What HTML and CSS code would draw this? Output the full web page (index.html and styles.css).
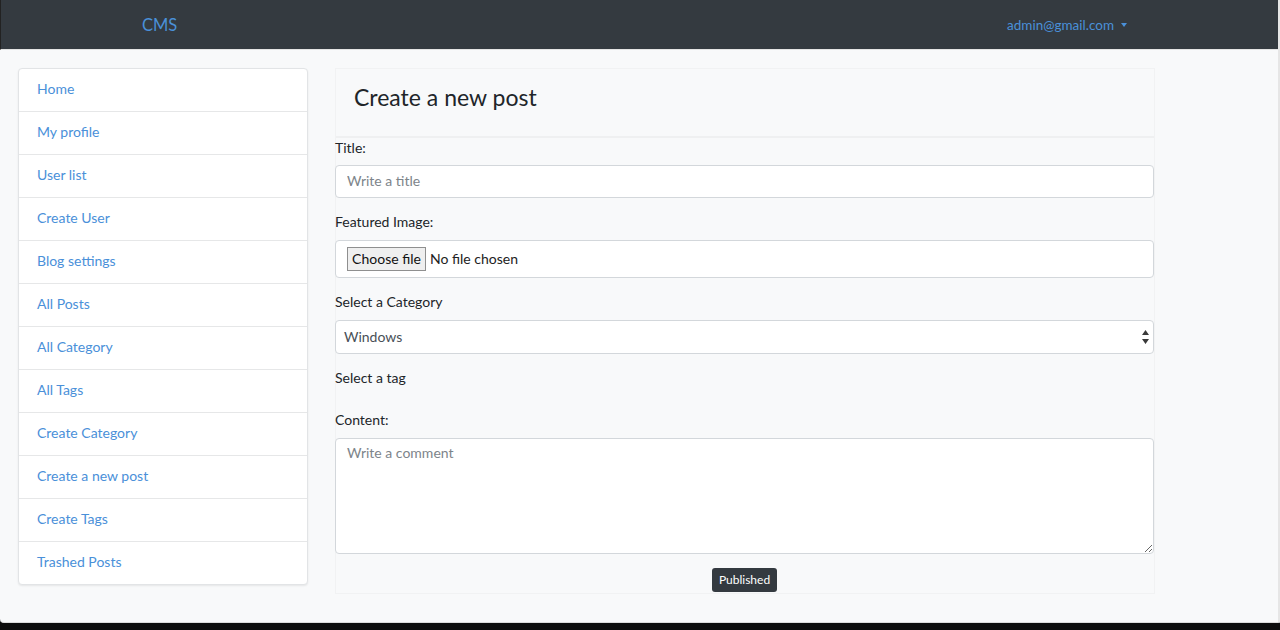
FILE: index.html
```html
<!DOCTYPE html>
<html lang="en">
<head>
<meta charset="utf-8">
<title>CMS - Create a new post</title>
<link rel="stylesheet" href="styles.css">
</head>
<body>
<div class="window">
  <nav class="navbar">
    <a class="brand" href="#">CMS</a>
    <a class="user" href="#">admin@gmail.com <span class="caret"></span></a>
  </nav>
  <div class="layout">
    <aside class="sidebar">
      <ul class="list">
        <li><a href="#">Home</a></li>
        <li><a href="#">My profile</a></li>
        <li><a href="#">User list</a></li>
        <li><a href="#">Create User</a></li>
        <li><a href="#">Blog settings</a></li>
        <li><a href="#">All Posts</a></li>
        <li><a href="#">All Category</a></li>
        <li><a href="#">All Tags</a></li>
        <li><a href="#">Create Category</a></li>
        <li><a href="#">Create a new post</a></li>
        <li><a href="#">Create Tags</a></li>
        <li><a href="#">Trashed Posts</a></li>
      </ul>
    </aside>
    <main class="card">
      <div class="card-header">Create a new post</div>
      <form class="card-body">
        <label class="lbl">Title:</label>
        <input class="field" type="text" placeholder="Write a title">
        <label class="lbl gap">Featured Image:</label>
        <div class="file">
          <span class="file-btn">Choose file</span>
          <span class="file-txt">No file chosen</span>
        </div>
        <label class="lbl gap">Select a Category</label>
        <div class="select">
          <span>Windows</span>
          <svg class="arrows" width="7" height="14" viewBox="0 0 7 14"><path d="M3.5 0 L7 5 L0 5 Z M0 9 L7 9 L3.5 14 Z" fill="#3a3a3a"/></svg>
        </div>
        <label class="lbl gap">Select a tag</label>
        <label class="lbl gap2">Content:</label>
        <textarea class="area" placeholder="Write a comment"></textarea>
        <div class="actions"><button type="button" class="btn">Published</button></div>
      </form>
    </main>
  </div>
</div>
</body>
</html>
```

FILE: styles.css
```css
* { box-sizing: border-box; }
html, body { margin: 0; padding: 0; }
body {
  background: #0d0d0d;
  font-family: Lato, "Open Sans", sans-serif;
  font-size: 14px;
  color: #212529;
}
.window {
  width: 1280px;
  height: 623px;
  background: #f8f9fa;
  border-right: 2px solid #e6e6e6;
  border-bottom: 1px solid #dcdcdc;
  border-bottom-left-radius: 4px;
  overflow: hidden;
}
.navbar {
  height: 50px;
  background: #343a40;
  border-bottom: 1px solid #e4e4e4;
  border-left: 1px solid #222;
  display: flex;
  align-items: center;
  justify-content: space-between;
  padding: 0 151px 0 141px;
}
.brand {
  color: #4a90d9;
  font-size: 16.5px;
  text-decoration: none;
}
.user {
  color: #4a90d9;
  font-size: 13.5px;
  text-decoration: none;
  display: flex;
  align-items: center;
}
.caret {
  display: inline-block;
  margin-left: 7px;
  border-top: 4px solid #4a90d9;
  border-left: 3.5px solid transparent;
  border-right: 3.5px solid transparent;
}
.layout {
  display: flex;
  align-items: flex-start;
  gap: 27px;
  padding: 18px 0 0 18px;
}
.sidebar { width: 290px; }
.list {
  list-style: none;
  margin: 0;
  padding: 0;
  background: #fff;
  border: 1px solid #e2e4e6;
  border-radius: 4px;
  box-shadow: 0 1px 2px rgba(0,0,0,.08);
}
.list li {
  height: 43px;
  border-bottom: 1px solid #e6e7e8;
  display: flex;
  align-items: center;
  padding: 0 0 3px 18px;
}
.list li:last-child { border-bottom: none; height: 42px; }
.list a {
  color: #4a90d9;
  text-decoration: none;
  font-size: 14px;
}
.card {
  width: 820px;
  background: #f8f9fa;
  border: 1px solid #f1f2f3;
}
.card-header {
  height: 69px;
  padding: 0 0 11px 18px;
  display: flex;
  align-items: center;
  font-size: 23px;
  border-bottom: 2px solid #eff0f1;
}
.card-body {
  display: flex;
  flex-direction: column;
  margin: 0 0 0 -1px;
}
.lbl {
  display: block;
  line-height: 20px;
  margin-bottom: 7px;
  font-size: 14px;
}
.lbl.gap { margin-top: 14px; margin-bottom: 8px; }
.lbl.gap2 { margin-top: 14px; margin-bottom: 8px; }
.field, .file, .select, .area {
  width: 819px;
  background: #fff;
  border: 1px solid #d3d7db;
  border-radius: 4px;
  font-family: inherit;
  font-size: 14px;
  color: #495057;
}
.field {
  height: 33px;
  padding: 0 11px 2px;
  outline: none;
}
.field::placeholder, .area::placeholder { color: #7d848a; }
.file {
  height: 38px;
  display: flex;
  align-items: center;
  padding-left: 11px;
}
.file-btn {
  height: 24px;
  width: 79px;
  display: flex;
  align-items: center;
  justify-content: center;
  background: #efefef;
  border: 1px solid #8f8f8f;
  color: #111;
  font-size: 14px;
  padding-bottom: 1px;
}
.file-txt { margin-left: 4px; color: #222; padding-bottom: 2px; }
.select {
  height: 34px;
  display: flex;
  align-items: center;
  justify-content: space-between;
  padding: 0 4px 0 8px;
}
.select span { padding-bottom: 2px; }
.area {
  height: 116px;
  padding: 5px 11px;
  resize: vertical;
  outline: none;
}
.actions {
  display: flex;
  justify-content: center;
  margin-top: 14px;
  margin-bottom: 1px;
}
.btn {
  height: 24px;
  width: 65px;
  padding: 0 0 2px;
  background: #343a40;
  color: #fff;
  border: none;
  border-radius: 3px;
  font-family: inherit;
  font-size: 12px;
}
```
